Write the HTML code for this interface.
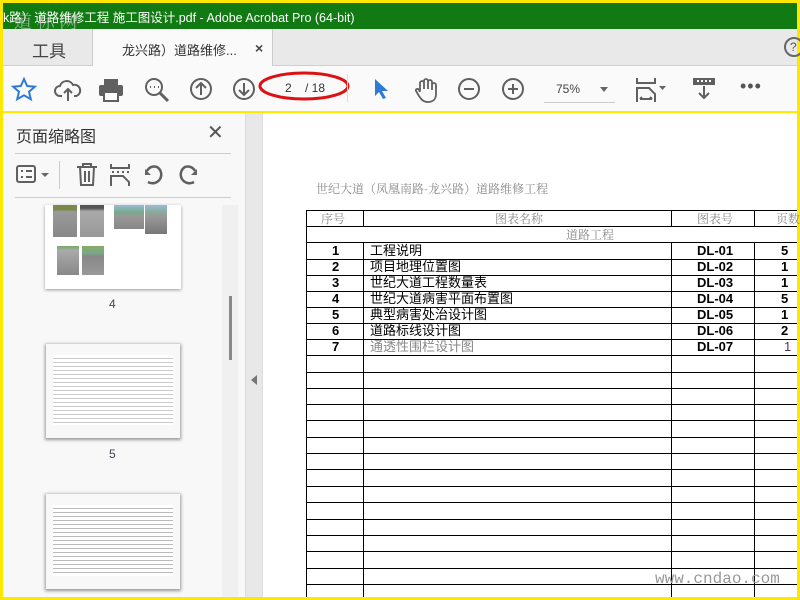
<!DOCTYPE html>
<html><head><meta charset="utf-8"><style>
*{margin:0;padding:0;box-sizing:border-box}
body{width:800px;height:600px;overflow:hidden;background:#ffe800;position:relative;font-family:"Liberation Sans","Noto Sans CJK SC",sans-serif}
.a{position:absolute}
.ln{position:absolute;background:#000}
.tx{position:absolute;font-size:12px;white-space:nowrap}
.r .tx{font-size:13px;line-height:16px}
.ic{position:absolute;stroke:#606060;fill:none;stroke-width:2}
</style></head><body>
<div class="a" style="left:3px;top:3px;width:794px;height:26px;background:#117a12"></div>
<div class="tx" style="left:3px;top:7px;color:#fff;font-size:12.5px">k路）道路维修工程 施工图设计.pdf - Adobe Acrobat Pro (64-bit)</div>
<div class="tx" style="left:14px;top:8px;color:rgba(220,220,220,.6);font-size:18px;font-family:'Noto Serif CJK SC',serif">道 标 网</div>
<div class="a" style="left:3px;top:29px;width:794px;height:37px;background:#e9e9e9;border-bottom:1px solid #d0d0d0"></div>
<div class="tx" style="left:32px;top:37px;font-size:17px;color:#444">工具</div>
<div class="a" style="left:92px;top:29px;width:181px;height:37px;background:#fafafa;border-left:1px solid #ccc;border-right:1px solid #ccc"></div>
<div class="tx" style="left:122px;top:40px;font-size:13px;color:#333">龙兴路）道路维修...</div>
<div class="tx" style="left:255px;top:40px;font-size:14px;color:#444;font-weight:bold">×</div>
<div class="a" style="left:784px;top:37px;width:20px;height:20px;border:2px solid #666;border-radius:50%;font-size:12px;color:#555;padding-left:4px;line-height:16px">?</div>
<div class="a" style="left:3px;top:66px;width:794px;height:46px;background:#fafafa;border-bottom:1px solid #d8d8d8"></div>
<svg class="ic" style="left:10px;top:76px;stroke:#2d7bd6" width="28" height="28"><path d="M14 3l3.2 7 7.6.7-5.8 5 1.8 7.5L14 19.3 7.2 23.2 9 15.7 3.2 10.7l7.6-.7z"/></svg>
<svg class="ic" style="left:54px;top:76px" width="28" height="28"><path d="M8 20H6a5 5 0 010-10 7 7 0 0113-1 5 5 0 013 11h-2M14 25V13M10 17l4-4 4 4"/></svg>
<svg class="ic" style="left:97px;top:76px;fill:#606060;stroke:none" width="28" height="28"><rect x="7" y="3" width="14" height="6"/><rect x="2" y="9" width="24" height="11" rx="2"/><rect x="7" y="16" width="14" height="9" fill="#fff" stroke="#606060" stroke-width="2"/></svg>
<svg class="ic" style="left:143px;top:76px" width="28" height="28"><circle cx="11" cy="11" r="8"/><path d="M17 17l8 8" stroke-width="3"/><path d="M7 11h1M11 11h1M15 11h1"/></svg>
<svg class="ic" style="left:188px;top:76px" width="26" height="26"><circle cx="13" cy="13" r="10"/><path d="M13 19V8M8 12l5-5 5 5"/></svg>
<svg class="ic" style="left:231px;top:76px" width="26" height="26"><circle cx="13" cy="13" r="10"/><path d="M13 7v11M8 14l5 5 5-5"/></svg>
<svg class="a" style="left:258px;top:68px" width="94" height="34"><ellipse cx="46" cy="18" rx="44" ry="13" fill="none" stroke="#d11" stroke-width="3"/></svg>
<div class="tx" style="left:285px;top:81px;color:#333">2</div>
<div class="tx" style="left:305px;top:81px;color:#333">/ 18</div>
<div class="a" style="left:347px;top:74px;width:1px;height:28px;background:#ddd"></div>
<svg class="a" style="left:372px;top:77px" width="20" height="24"><path d="M3 2v17l4-4 4 7 3-1-4-7h6z" fill="#2d7bd6"/></svg>
<svg class="ic" style="left:413px;top:76px;stroke-width:1.8" width="26" height="28"><path d="M7 15V7a2 2 0 014 0v6V5a2 2 0 014 0v8V6a2 2 0 014 0v8-5a2 2 0 014 0v9c0 5-3 8-8 8s-7-3-9-6l-3-5c-1-2 2-3 3-1l1 2"/></svg>
<svg class="ic" style="left:456px;top:76px" width="26" height="26"><circle cx="13" cy="13" r="10"/><path d="M8 13h10"/></svg>
<svg class="ic" style="left:500px;top:76px" width="26" height="26"><circle cx="13" cy="13" r="10"/><path d="M8 13h10M13 8v10"/></svg>
<div class="tx" style="left:556px;top:82px;color:#444">75%</div>
<div class="a" style="left:600px;top:87px;border:4px solid transparent;border-top:5px solid #666"></div>
<div class="a" style="left:544px;top:102px;width:71px;height:1px;background:#ccc"></div>
<svg class="ic" style="left:636px;top:76px" width="36" height="26"><path d="M1 2v5h18V2M1 26V12h12l6 6v8M4 23h12M4 23l2-2M16 23l-2-2"/><path d="M23 10h7l-3.5 4z" fill="#666" stroke="none"/></svg>
<svg class="ic" style="left:690px;top:76px" width="28" height="26"><rect x="3" y="2" width="22" height="7" fill="#606060" stroke="none"/><path d="M7 5h2M11 5h2M15 5h2M19 5h2" stroke="#fff"/><path d="M14 10v12M9 17l5 5 5-5"/></svg>
<div class="tx" style="left:740px;top:76px;font-size:18px;color:#555;letter-spacing:1px">•••</div>
<div class="a" style="left:3px;top:113px;width:242px;height:484px;background:#f8f8f8"></div>
<div class="tx" style="left:16px;top:123px;font-size:16px;color:#333">页面缩略图</div>
<div class="tx" style="left:207px;top:120px;font-size:20px;color:#555">✕</div>
<div class="a" style="left:15px;top:153px;width:216px;height:1px;background:#ccc"></div>
<div class="a" style="left:15px;top:197px;width:216px;height:1px;background:#ccc"></div>
<svg class="ic" style="left:15px;top:163px" width="40" height="24"><rect x="2" y="3" width="18" height="16" rx="2"/><path d="M6 8h2M11 8h6M6 14h2M11 14h6"/><path d="M26 10h8l-4 4z" fill="#666" stroke="none"/></svg>
<div class="a" style="left:59px;top:161px;width:1px;height:28px;background:#ccc"></div>
<svg class="ic" style="left:75px;top:162px" width="24" height="26"><path d="M2 5h20M8 5V2h8v3M5 5l1 18h12l1-18M10 9v11M14 9v11"/></svg>
<svg class="ic" style="left:109px;top:162px" width="24" height="26"><path d="M2 2v4h18V2M3 10h2M8 10h2M13 10h2M18 10h2M2 24V14h12l6 6v4"/></svg>
<svg class="ic" style="left:142px;top:163px;stroke-width:2.5" width="24" height="24"><path d="M6 19a8 8 0 109-15 8 8 0 00-10 4"/><path d="M3 6v6h6z" fill="#666" stroke="none"/></svg>
<svg class="ic" style="left:176px;top:163px;stroke-width:2.5" width="24" height="24"><g transform="translate(24 0) scale(-1 1)"><path d="M6 19a8 8 0 109-15 8 8 0 00-10 4"/><path d="M3 6v6h6z" fill="#666" stroke="none"/></g></svg>
<div class="a" style="left:45px;top:205px;width:136px;height:84px;background:#fff;box-shadow:0 1px 3px #999"></div>
<div class="a" style="left:53px;top:205px;width:24px;height:32px;background:linear-gradient(#7a8a4a 0,#7a8a4a 15%,#9a9a9a 20%,#888)"></div>
<div class="a" style="left:80px;top:205px;width:24px;height:32px;background:linear-gradient(#555 0,#555 10%,#aaa 20%,#999)"></div>
<div class="a" style="left:114px;top:205px;width:30px;height:24px;background:linear-gradient(#9bd 0,#7a8 30%,#999 45%,#888)"></div>
<div class="a" style="left:145px;top:205px;width:22px;height:29px;background:linear-gradient(#9bd 0,#8a9 25%,#999 40%,#777)"></div>
<div class="a" style="left:57px;top:246px;width:22px;height:29px;background:linear-gradient(#7a6 0,#aaa 15%,#888)"></div>
<div class="a" style="left:82px;top:246px;width:22px;height:29px;background:linear-gradient(#8a6 0,#7a8 25%,#888 35%,#999)"></div>
<div class="tx" style="left:109px;top:297px;font-size:12px;color:#445">4</div>
<div class="a" style="left:45px;top:343px;width:136px;height:96px;background:#fff;box-shadow:0 1px 3px #999;background-image:repeating-linear-gradient(#fff 0 3px,#ccc 3px 4px);background-clip:content-box;padding:12px 8px 14px"></div>
<div class="tx" style="left:109px;top:447px;font-size:12px;color:#445">5</div>
<div class="a" style="left:45px;top:493px;width:136px;height:97px;background:#fff;box-shadow:0 1px 3px #999;background-image:repeating-linear-gradient(#fff 0 3px,#bbb 3px 4px);background-clip:content-box;padding:12px 8px 14px"></div>
<div class="a" style="left:222px;top:205px;width:16px;height:392px;background:#f0f0f0"></div>
<div class="a" style="left:229px;top:296px;width:3px;height:64px;background:#888"></div>
<div class="a" style="left:245px;top:113px;width:18px;height:484px;background:#e8e8e8;border-left:1px solid #ddd;border-right:1px solid #ddd"></div>
<div class="a" style="left:251px;top:375px;border:5px solid transparent;border-right:6px solid #777;border-left:0"></div>
<div class="a" style="left:263px;top:113px;width:534px;height:484px;background:#fff"></div>
<div class="tx" style="left:316px;top:180px;color:#888;font-family:'Noto Serif CJK SC',serif">世纪大道（凤凰南路-龙兴路）道路维修工程</div>
<div class="ln" style="left:306px;top:210px;width:491px;height:1px"></div>
<div class="ln" style="left:306px;top:226px;width:491px;height:1px"></div>
<div class="ln" style="left:306px;top:242px;width:491px;height:1px"></div>
<div class="ln" style="left:306px;top:210px;width:1px;height:387px"></div>
<div class="ln" style="left:363px;top:210px;width:1px;height:17px"></div>
<div class="ln" style="left:363px;top:242px;width:1px;height:355px"></div>
<div class="ln" style="left:671px;top:210px;width:1px;height:17px"></div>
<div class="ln" style="left:671px;top:242px;width:1px;height:355px"></div>
<div class="ln" style="left:754px;top:210px;width:1px;height:17px"></div>
<div class="ln" style="left:754px;top:242px;width:1px;height:355px"></div>
<div class="tx" style="left:321px;top:210px;color:#888;font-family:'Noto Serif CJK SC',serif">序号</div>
<div class="tx" style="left:495px;top:210px;color:#888;font-family:'Noto Serif CJK SC',serif">图表名称</div>
<div class="tx" style="left:697px;top:210px;color:#888;font-family:'Noto Serif CJK SC',serif">图表号</div>
<div class="tx" style="left:776px;top:210px;color:#888;font-family:'Noto Serif CJK SC',serif">页数</div>
<div class="tx" style="left:566px;top:226px;color:#888;font-family:'Noto Serif CJK SC',serif">道路工程</div>
<div class="r">
<div class="tx" style="left:332px;top:243px;font-weight:bold">1</div><div class="tx" style="left:370px;top:243px">工程说明</div><div class="tx" style="left:697px;top:243px;font-weight:bold">DL-01</div><div class="tx" style="left:781px;top:243px;font-weight:bold">5</div>
<div class="tx" style="left:332px;top:259px;font-weight:bold">2</div><div class="tx" style="left:370px;top:259px">项目地理位置图</div><div class="tx" style="left:697px;top:259px;font-weight:bold">DL-02</div><div class="tx" style="left:781px;top:259px;font-weight:bold">1</div>
<div class="tx" style="left:332px;top:275px;font-weight:bold">3</div><div class="tx" style="left:370px;top:275px">世纪大道工程数量表</div><div class="tx" style="left:697px;top:275px;font-weight:bold">DL-03</div><div class="tx" style="left:781px;top:275px;font-weight:bold">1</div>
<div class="tx" style="left:332px;top:291px;font-weight:bold">4</div><div class="tx" style="left:370px;top:291px">世纪大道病害平面布置图</div><div class="tx" style="left:697px;top:291px;font-weight:bold">DL-04</div><div class="tx" style="left:781px;top:291px;font-weight:bold">5</div>
<div class="tx" style="left:332px;top:307px;font-weight:bold">5</div><div class="tx" style="left:370px;top:307px">典型病害处治设计图</div><div class="tx" style="left:697px;top:307px;font-weight:bold">DL-05</div><div class="tx" style="left:781px;top:307px;font-weight:bold">1</div>
<div class="tx" style="left:332px;top:323px;font-weight:bold">6</div><div class="tx" style="left:370px;top:323px">道路标线设计图</div><div class="tx" style="left:697px;top:323px;font-weight:bold">DL-06</div><div class="tx" style="left:781px;top:323px;font-weight:bold">2</div>
<div class="tx" style="left:332px;top:339px;font-weight:bold">7</div><div class="tx" style="left:370px;top:339px;color:#888">通透性围栏设计图</div><div class="tx" style="left:697px;top:339px;font-weight:bold">DL-07</div><div class="tx" style="left:784px;top:339px;color:#535">1</div>
</div>
<div class="ln" style="left:306px;top:259px;width:491px;height:1px"></div>
<div class="ln" style="left:306px;top:275px;width:491px;height:1px"></div>
<div class="ln" style="left:306px;top:291px;width:491px;height:1px"></div>
<div class="ln" style="left:306px;top:307px;width:491px;height:1px"></div>
<div class="ln" style="left:306px;top:323px;width:491px;height:1px"></div>
<div class="ln" style="left:306px;top:339px;width:491px;height:1px"></div>
<div class="ln" style="left:306px;top:355px;width:491px;height:1px"></div>
<div class="ln" style="left:306px;top:372px;width:491px;height:1px"></div>
<div class="ln" style="left:306px;top:388px;width:491px;height:1px"></div>
<div class="ln" style="left:306px;top:404px;width:491px;height:1px"></div>
<div class="ln" style="left:306px;top:420px;width:491px;height:1px"></div>
<div class="ln" style="left:306px;top:437px;width:491px;height:1px"></div>
<div class="ln" style="left:306px;top:453px;width:491px;height:1px"></div>
<div class="ln" style="left:306px;top:469px;width:491px;height:1px"></div>
<div class="ln" style="left:306px;top:486px;width:491px;height:1px"></div>
<div class="ln" style="left:306px;top:502px;width:491px;height:1px"></div>
<div class="ln" style="left:306px;top:519px;width:491px;height:1px"></div>
<div class="ln" style="left:306px;top:535px;width:491px;height:1px"></div>
<div class="ln" style="left:306px;top:551px;width:491px;height:1px"></div>
<div class="ln" style="left:306px;top:568px;width:491px;height:1px"></div>
<div class="ln" style="left:306px;top:584px;width:491px;height:1px"></div>
<div class="tx" style="left:655px;top:570px;font-size:16px;color:#999;font-family:'Liberation Mono',monospace">www.cndao.com</div>
</body></html>
